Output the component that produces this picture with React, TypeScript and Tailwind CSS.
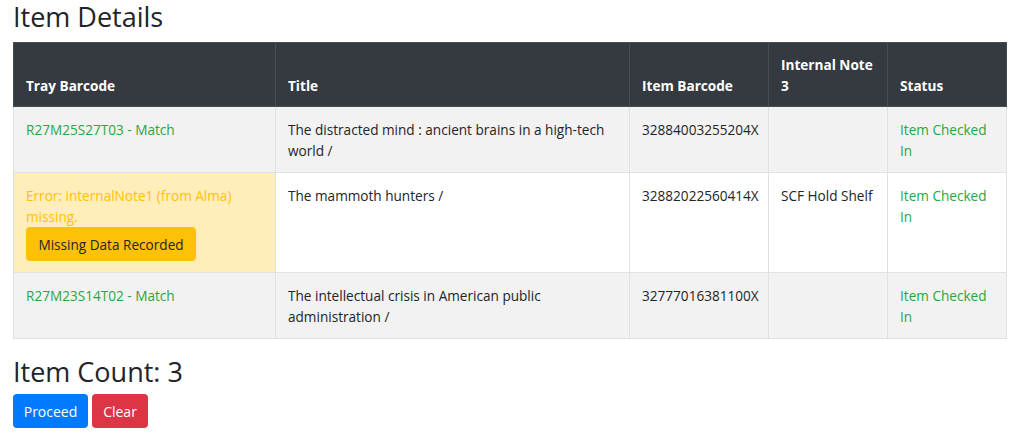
import React from "react";

const font = { fontFamily: '"Open Sans", "Noto Sans", sans-serif' };

export default function App() {
  const rows = [
    {
      tray: "R27M25S27T03 - Match",
      title: "The distracted mind : ancient brains in a high-tech world /",
      barcode: "32884003255204X",
      note: "",
      striped: true,
      error: false,
    },
    {
      tray: "",
      title: "The mammoth hunters /",
      barcode: "32882022560414X",
      note: "SCF Hold Shelf",
      striped: false,
      error: true,
    },
    {
      tray: "R27M23S14T02 - Match",
      title: "The intellectual crisis in American public administration /",
      barcode: "32777016381100X",
      note: "",
      striped: true,
      error: false,
    },
  ];
  const td = "border border-[#dee2e6] pl-3 pr-2 pt-3 pb-[11px] align-top";
  return (
    <div className="bg-white px-[13px] text-[#212529]" style={font}>
      <h3 className="text-[27px] leading-[34px] mb-2 font-normal">Item Details</h3>
      <table className="w-[993px] border-collapse text-[13.6px] leading-[21px] table-fixed">
        <colgroup>
          <col className="w-[262px]" />
          <col className="w-[354px]" />
          <col className="w-[139px]" />
          <col className="w-[119px]" />
          <col className="w-[119px]" />
        </colgroup>
        <thead>
          <tr className="bg-[#343a40] text-white">
            {["Tray Barcode", "Title", "Item Barcode", "Internal Note 3", "Status"].map((h) => (
              <th
                key={h}
                className="border border-[#454d55] pl-3 pr-2 pt-[11px] pb-[10px] text-left align-bottom font-bold"
              >
                {h}
              </th>
            ))}
          </tr>
        </thead>
        <tbody>
          {rows.map((r, i) => {
            const bg = r.striped ? "bg-[#f2f2f2]" : "bg-white";
            return (
              <tr key={i} className={bg}>
                <td className={td + (r.error ? " bg-[#ffeeba]" : "")}>
                  {r.error ? (
                    <div>
                      <div className="text-[#ffc107]">Error: internalNote1 (from Alma) missing.</div>
                      <button className="h-[34px] w-[170px] rounded-[4px] bg-[#ffc107] text-[#212529] text-[13.6px] leading-[21px]">
                        Missing Data Recorded
                      </button>
                    </div>
                  ) : (
                    <span className="text-[#28a745]">{r.tray}</span>
                  )}
                </td>
                <td className={td}>{r.title}</td>
                <td className={td}>{r.barcode}</td>
                <td className={td}>{r.note}</td>
                <td className={td + " text-[#28a745]"}>Item Checked In</td>
              </tr>
            );
          })}
        </tbody>
      </table>
      <h3 className="text-[27px] leading-[34px] mt-4 mb-[5px] font-normal">Item Count: 3</h3>
      <div className="flex gap-1">
        <button className="h-[34px] w-[75px] rounded-[4px] bg-[#007bff] text-white text-[14px]">Proceed</button>
        <button className="h-[34px] w-[56px] rounded-[4px] bg-[#dc3545] text-white text-[14px]">Clear</button>
      </div>
    </div>
  );
}
